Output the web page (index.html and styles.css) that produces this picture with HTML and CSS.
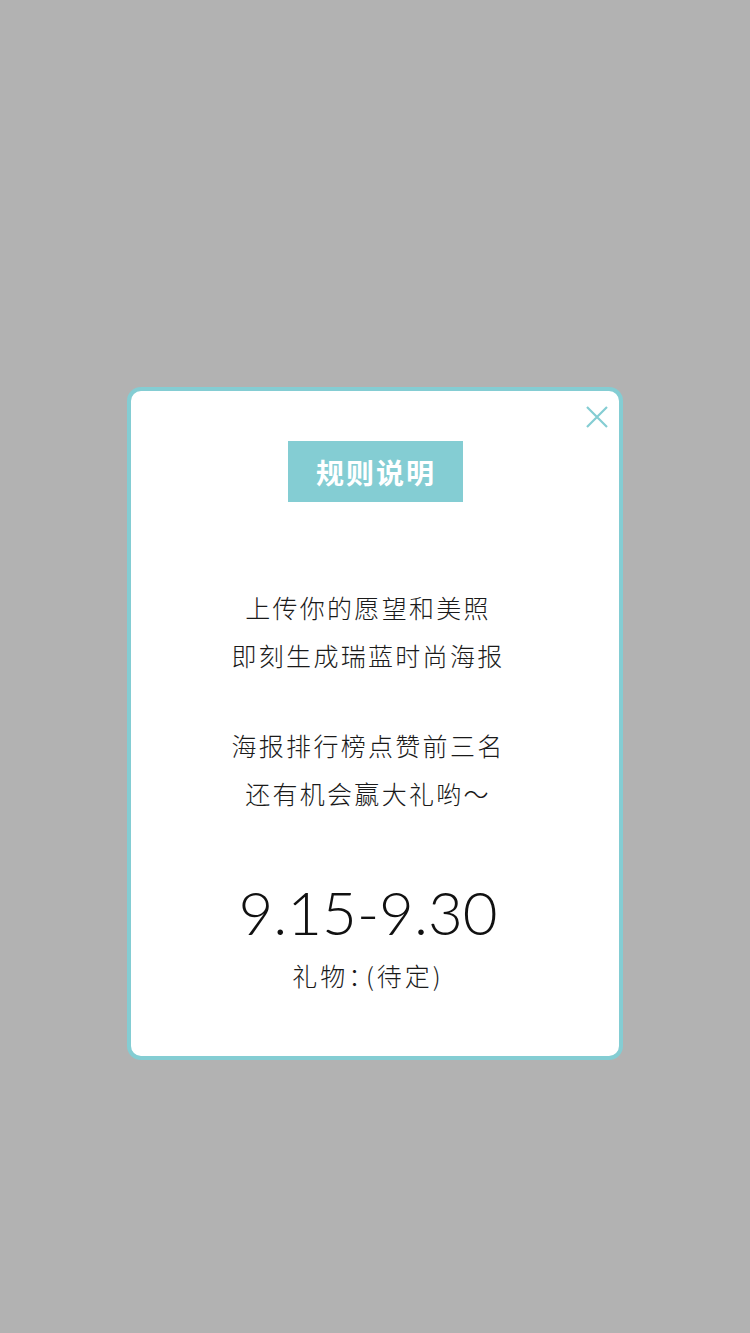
FILE: index.html
```html
<!DOCTYPE html>
<html lang="zh">
<head>
<meta charset="utf-8">
<link rel="stylesheet" href="styles.css">
</head>
<body>
<div class="page">
  <div class="modal">
    <svg class="close" width="22" height="22" viewBox="0 0 22 22"><path d="M1 1L21 21M21 1L1 21" stroke="#84cdd3" stroke-width="2.2" fill="none"/></svg>
    <div class="title">规则说明</div>
    <div class="para">
      <p>上传你的愿望和美照</p>
      <p>即刻生成瑞蓝时尚海报</p>
    </div>
    <div class="para second">
      <p>海报排行榜点赞前三名</p>
      <p>还有机会赢大礼哟～</p>
    </div>
    <div class="date">9.15-9.30</div>
    <div class="gift">礼物<span class="colon">：</span>(待定)</div>
  </div>
</div>
</body>
</html>
```

FILE: styles.css
```css
html, body {
  margin: 0;
  padding: 0;
}
body {
  background: #b2b2b2;
  width: 750px;
  height: 1333px;
  font-family: "Noto Sans CJK SC", "Noto Sans", sans-serif;
}
.page {
  display: flex;
  justify-content: center;
  padding-top: 387px;
}
.modal {
  position: relative;
  box-sizing: border-box;
  width: 496px;
  height: 673px;
  background: #fff;
  border: 4px solid #84cdd3;
  border-radius: 14px;
  display: flex;
  flex-direction: column;
  align-items: center;
  padding-top: 50px;
}
.close {
  position: absolute;
  top: 15px;
  right: 11px;
}
.title {
  width: 175px;
  height: 61px;
  background: #84cdd3;
  color: #fff;
  font-size: 28px;
  font-weight: 700;
  display: flex;
  align-items: center;
  justify-content: center;
  letter-spacing: 2px;
  text-indent: 2px;
}
.para {
  margin-top: 81px;
  margin-right: 14px;
  text-align: center;
  color: #1a1a1a;
  font-size: 25px;
  font-weight: 300;
  letter-spacing: 2.3px;
  line-height: 48px;
}
.para p {
  margin: 0;
}
.para.second {
  margin-top: 42px;
}
.date {
  margin-top: 60px;
  margin-right: 14px;
  font-family: "Lato", "Open Sans", sans-serif;
  font-weight: 300;
  font-size: 60px;
  line-height: 70px;
  color: #111;
}
.gift {
  margin-top: 10px;
  margin-right: 14px;
  font-size: 25px;
  font-weight: 300;
  color: #1a1a1a;
  line-height: 36px;
  letter-spacing: 3px;
}
.colon {
  font-feature-settings: "halt";
  letter-spacing: 5px;
}
```
